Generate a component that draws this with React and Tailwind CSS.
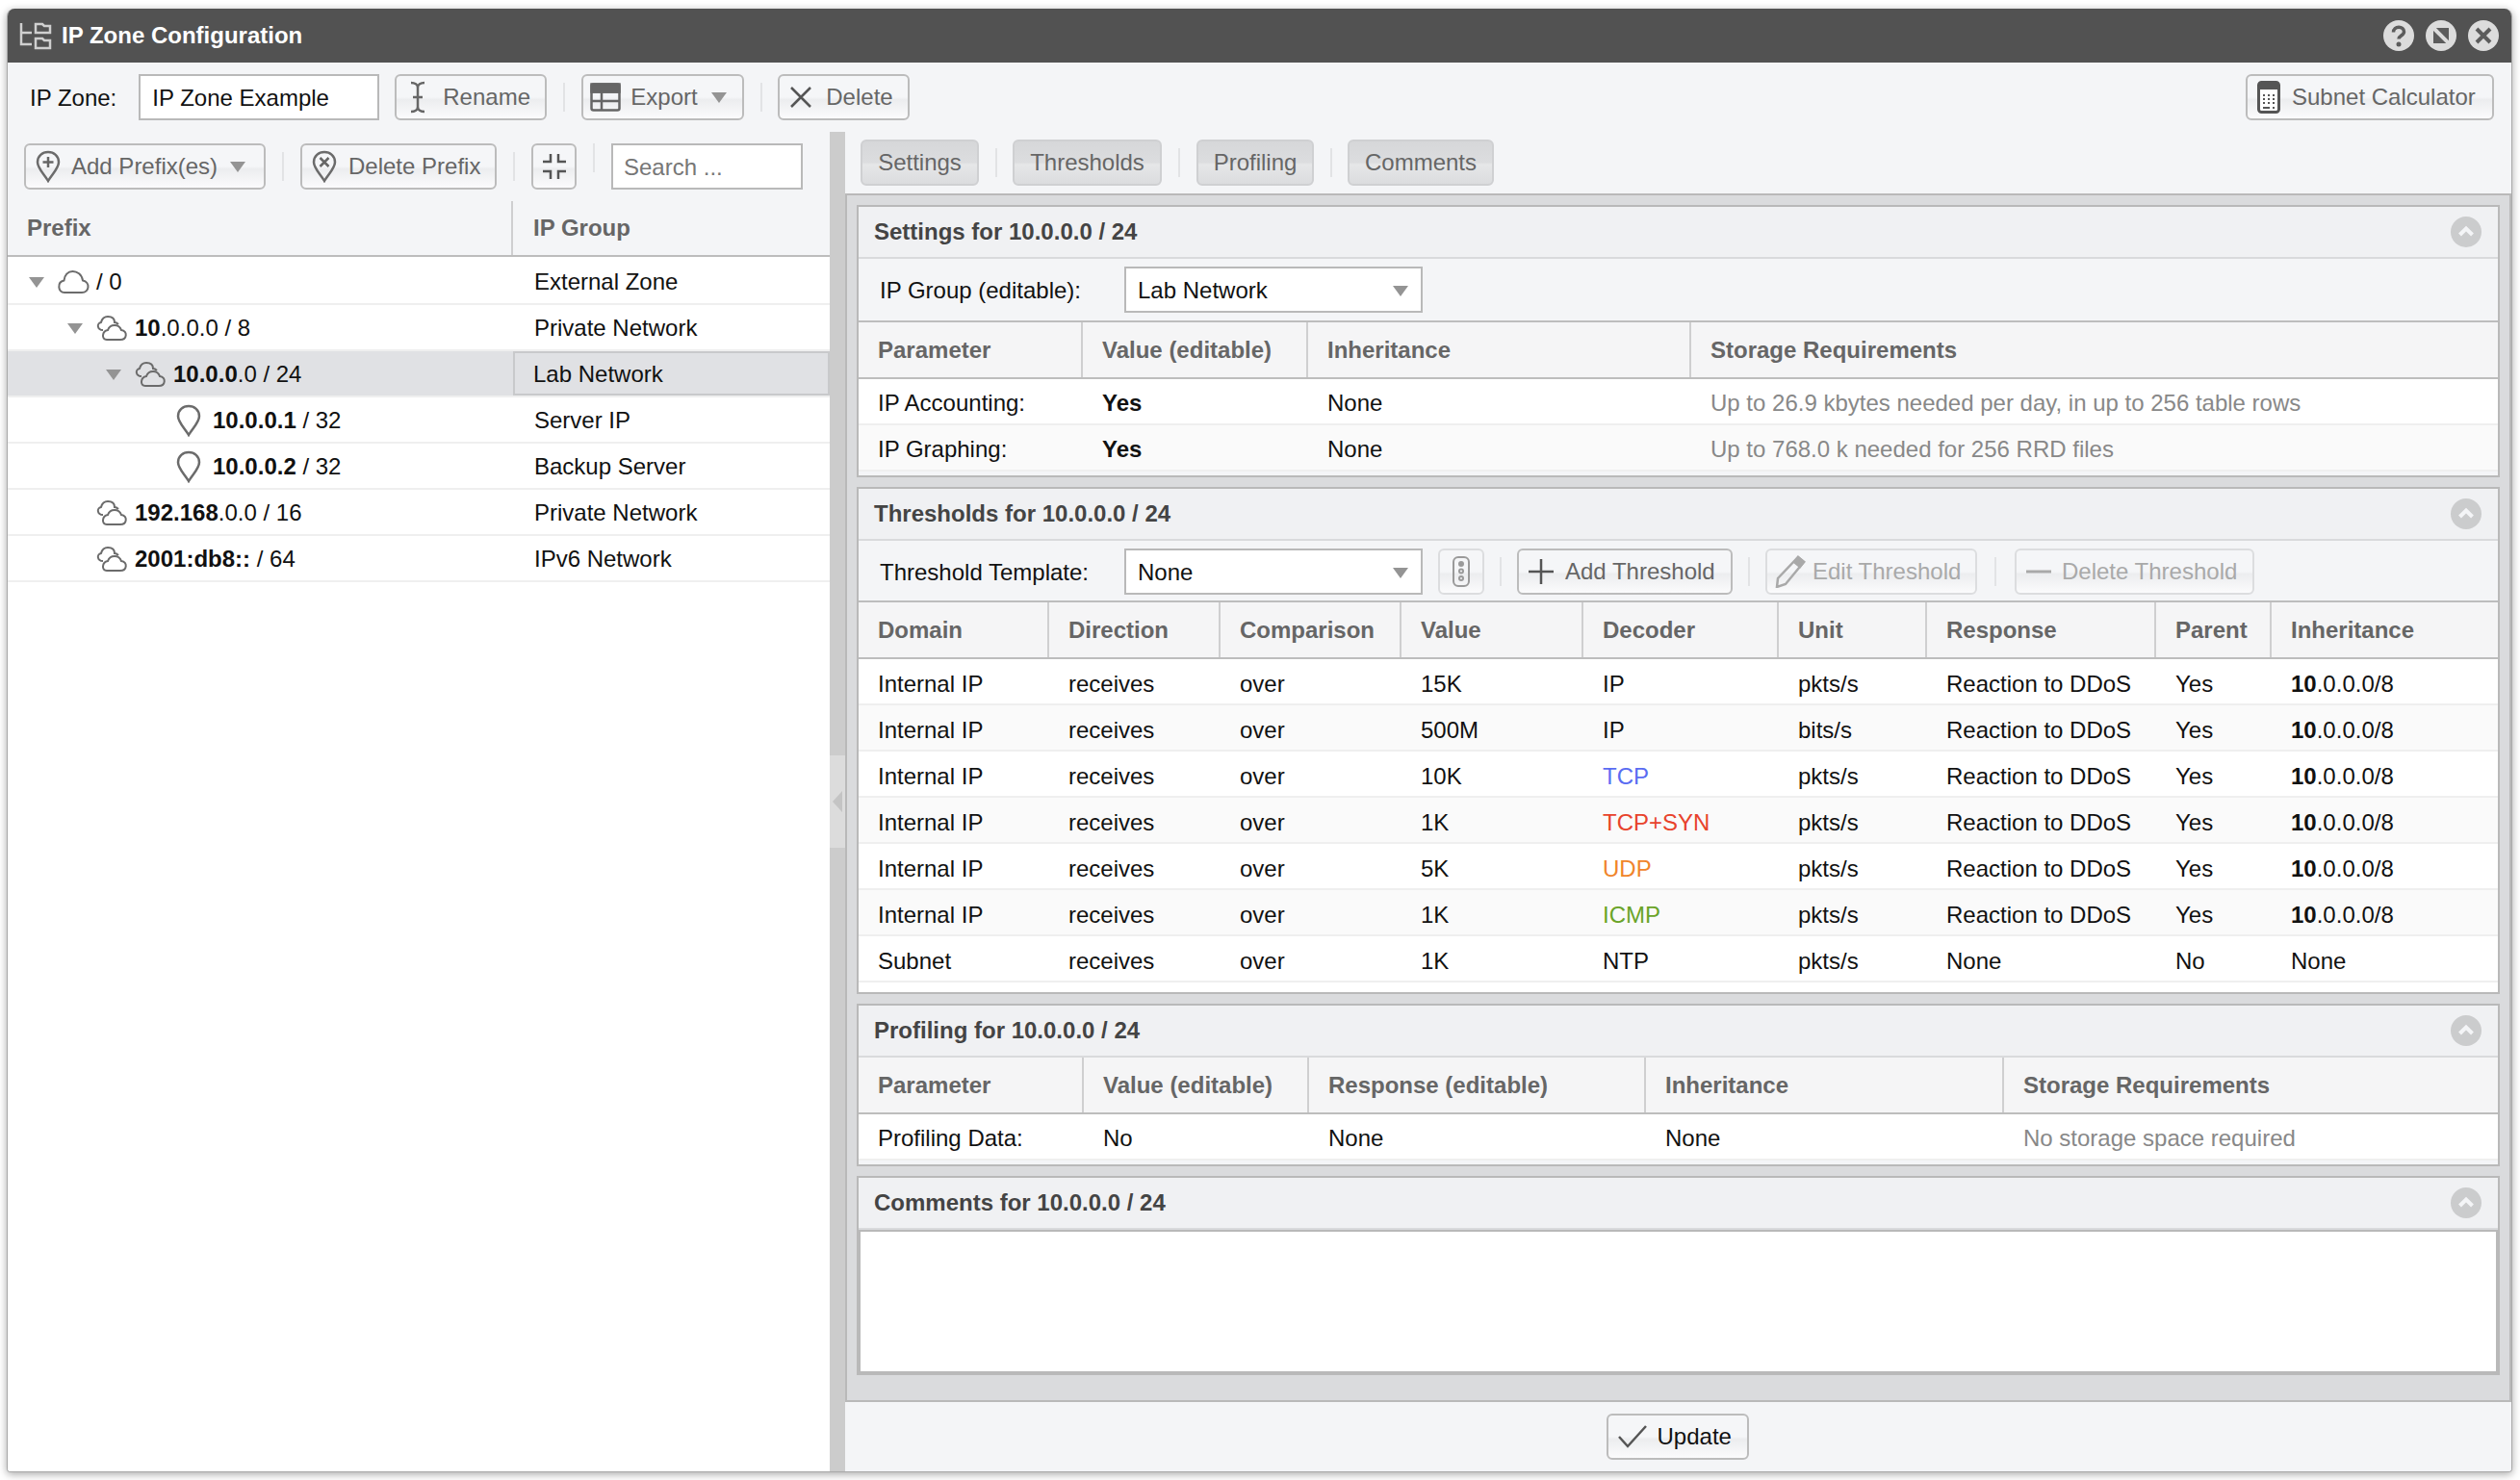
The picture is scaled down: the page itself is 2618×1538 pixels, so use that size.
import React from "react";

const btnBg =
  "bg-[linear-gradient(#f5f6f8_0%,#f5f6f8_50%,#ecedef_56%,#fbfbfc_100%)]";

function Arrow({ className = "" }) {
  return (
    <svg width="16" height="11" viewBox="0 0 16 11" className={className}>
      <path d="M0 0h16l-8 11z" fill="#949494" />
    </svg>
  );
}

function Cloud() {
  return (
    <svg width="34" height="26" viewBox="0 0 34 26" fill="none" stroke="#6b6b6b" strokeWidth="2">
      <path d="M8 24h18c8 0 9-11 1-12.5C26 5 21 2 16.500 2 11.500 2 8 6 7.500 11.500 0 13 1 24 8 24z" />
    </svg>
  );
}

function Clouds() {
  return (
    <svg width="34" height="26" viewBox="0 0 34 26" fill="none" stroke="#6b6b6b" strokeWidth="2">
      <path d="M12 25h14c7 0 8-9 1-10-1-3-4-5-7-5-3 0-6 2-7 5-6 1-7 10-1 10z" />
      <path d="M8 15C2 15 1 8 6 7c1-4 4-6 7-6 4 0 7 2 7 6 2 0 3 1 4 2" />
    </svg>
  );
}

function Pin({ inner }) {
  return (
    <svg width="26" height="34" viewBox="0 0 26 34" fill="none" stroke="#6b6b6b" strokeWidth="2.500">
      <path d="M13 32C9 25 2 19 2 12.500 2 6 7 2 13 2s11 4 11 10.500C24 19 17 25 13 32z" />
      {inner}
    </svg>
  );
}

function Btn({ w, children, disabled, onlyIcon }) {
  return (
    <div
      className={`${w} ${btnBg} h-[48px] shrink-0 flex items-center border-2 rounded-[6px] ${
        onlyIcon ? "justify-center" : "px-[10px] gap-[11px]"
      } ${disabled ? "border-[#dcdddf] text-[#a9a9a9]" : "border-[#bcbcbc] text-[#666]"}`}
    >
      {children}
    </div>
  );
}

function Sep({ m = "mx-[17px]" }) {
  return <div className={`w-[2px] h-[30px] shrink-0 bg-[#e2e3e5] ${m}`} />;
}

function InputBox({ w, children, gray, pl = "pl-[12px]" }) {
  return (
    <div
      className={`${w} h-[48px] shrink-0 flex items-center justify-between bg-white border-2 border-[#b9b9b9] pt-[2px] ${pl} pr-[13px] ${
        gray ? "text-[#777]" : "text-[#111]"
      }`}
    >
      {children}
    </div>
  );
}

const treeRows = [
  { pad: "pl-[21px]", arrow: true, icon: <Cloud />, bold: "", rest: "/ 0", group: "External Zone" },
  { pad: "pl-[61px]", arrow: true, icon: <Clouds />, bold: "10", rest: ".0.0.0 / 8", group: "Private Network" },
  { pad: "pl-[101px]", arrow: true, icon: <Clouds />, bold: "10.0.0", rest: ".0 / 24", group: "Lab Network", selected: true },
  { pad: "pl-[175px]", icon: <Pin />, bold: "10.0.0.1", rest: " / 32", group: "Server IP", pin: true },
  { pad: "pl-[175px]", icon: <Pin />, bold: "10.0.0.2", rest: " / 32", group: "Backup Server", pin: true },
  { pad: "pl-[91px]", icon: <Clouds />, bold: "192.168", rest: ".0.0 / 16", group: "Private Network" },
  { pad: "pl-[91px]", icon: <Clouds />, bold: "2001:db8::", rest: " / 64", group: "IPv6 Network" },
];

function TreeRow({ row }) {
  return (
    <div
      className={`h-[48px] flex border-b-2 border-[#efefef] text-[#111] ${row.selected ? "bg-[#e0e1e4]" : ""}`}
    >
      <div className={`w-[525px] shrink-0 flex items-center pt-[2px] ${row.pad}`}>
        {row.arrow && <Arrow className="mr-[13px] ml-[1px]" />}
        {row.icon}
        <span className={`${row.pin ? "ml-[12px]" : "ml-[7px]"} whitespace-pre`}>
          <b>{row.bold}</b>
          {row.rest}
        </span>
      </div>
      <div
        className={`flex-1 flex items-center pt-[2px] ${row.selected ? "border-2 border-[#c8c9cb] pl-[19px]" : "pl-[22px]"}`}
      >
        {row.group}
      </div>
    </div>
  );
}

function Panel({ title, children }) {
  return (
    <div className="border-2 border-[#b9b9b9] bg-[#f4f5f7]">
      <div className="h-[52px] flex items-center justify-between bg-[#f0f1f3] pl-[16px] pr-[17px] border-b-2 border-[#d9dadc] box-content">
        <span className="font-bold text-[#444]">{title}</span>
        <svg width="32" height="32" viewBox="0 0 32 32">
          <circle cx="16" cy="16" r="16" fill="#cbcccd" />
          <path d="M9.500 19L16 12.500 22.500 19" fill="none" stroke="#f4f5f7" strokeWidth="4" />
        </svg>
      </div>
      {children}
    </div>
  );
}

function HeadRow({ cols, names }) {
  return (
    <div className={`grid ${cols} h-[59px] bg-[#f5f5f6] border-b-2 border-[#bdbdbd] font-bold text-[#666]`}>
      {names.map((n, i) => (
        <div
          key={n}
          className={`flex items-center pl-[20px] ${i < names.length - 1 ? "border-r-2 border-[#cfcfd0]" : ""}`}
        >
          {n}
        </div>
      ))}
    </div>
  );
}

function BodyRow({ cols, cells, alt, pt = "pt-[4px]" }) {
  return (
    <div className={`grid ${cols} h-[48px] border-b-2 border-[#efefef] text-[#111] ${alt ? "bg-[#fafafa]" : "bg-white"}`}>
      {cells.map((c, i) => (
        <div key={i} className={`flex items-center pl-[20px] whitespace-nowrap ${pt}`}>
          {c}
        </div>
      ))}
    </div>
  );
}

const settingCols = "grid-cols-[233px_234px_398px_1fr]";
const thresholdCols = "grid-cols-[198px_178px_188px_189px_203px_154px_238px_120px_1fr]";
const profilingCols = "grid-cols-[234px_234px_350px_372px_1fr]";

const inherit = (
  <span>
    <b>10</b>.0.0.0/8
  </span>
);
const thresholdRows = [
  ["Internal IP", "receives", "over", "15K", "IP", "pkts/s", "Reaction to DDoS", "Yes", inherit],
  ["Internal IP", "receives", "over", "500M", "IP", "bits/s", "Reaction to DDoS", "Yes", inherit],
  ["Internal IP", "receives", "over", "10K", <span className="text-[#5a6cf2]">TCP</span>, "pkts/s", "Reaction to DDoS", "Yes", inherit],
  ["Internal IP", "receives", "over", "1K", <span className="text-[#e8432c]">TCP+SYN</span>, "pkts/s", "Reaction to DDoS", "Yes", inherit],
  ["Internal IP", "receives", "over", "5K", <span className="text-[#f0852b]">UDP</span>, "pkts/s", "Reaction to DDoS", "Yes", inherit],
  ["Internal IP", "receives", "over", "1K", <span className="text-[#6aa428]">ICMP</span>, "pkts/s", "Reaction to DDoS", "Yes", inherit],
  ["Subnet", "receives", "over", "1K", "NTP", "pkts/s", "None", "No", "None"],
];

function TitleCircle({ children }) {
  return (
    <svg width="32" height="32" viewBox="0 0 32 32">
      <circle cx="16" cy="16" r="16" fill="#dcdcdc" />
      {children}
    </svg>
  );
}

function Tab({ w, children }) {
  return (
    <div
      className={`${w} h-[48px] shrink-0 flex items-center justify-center rounded-[6px] border-2 border-[#cfd0d2] text-[#666] bg-[linear-gradient(#d6d7d9_0%,#dcdddf_50%,#e6e7e8_54%,#dbdcde_100%)]`}
    >
      {children}
    </div>
  );
}

export default function App() {
  return (
    <div className="w-[2618px] h-[1538px] bg-white pt-[9px] pl-[7px] font-['Liberation_Sans',Arial,sans-serif] text-[24px] leading-none overflow-hidden">
      <div className="w-[2603px] h-[1521px] flex flex-col rounded-t-[8px] rounded-b-[4px] border-x border-b border-[#a9a9a9] shadow-[0_2px_8px_rgba(0,0,0,0.35)] overflow-hidden bg-[#f4f5f7]">
        {/* title bar */}
        <div className="h-[56px] shrink-0 bg-[#525252] flex items-center justify-between pl-[12px] pr-[13px]">
          <div className="flex items-center gap-[10px]">
            <svg width="34" height="30" viewBox="0 0 34 30" fill="none" stroke="#cfcfcf" strokeWidth="2.500">
              <path d="M2 2v22h11M2 12h11" />
              <path d="M17 3h7l2 2h6v7H17zM17 18h7l2 2h6v8H17z" />
            </svg>
            <span className="text-white font-bold">IP Zone Configuration</span>
          </div>
          <div className="flex items-center gap-[12px]">
            <TitleCircle>
              <path d="M10.500 12.500c0-7 11-7 11-.5 0 4-5.500 4-5.500 7.500" fill="none" stroke="#5c5c5c" strokeWidth="3.500" />
              <circle cx="16" cy="25" r="2.500" fill="#5c5c5c" />
            </TitleCircle>
            <TitleCircle>
              <rect x="8" y="8" width="16" height="16" fill="#5c5c5c" />
              <path d="M6 6l20 20" stroke="#dcdcdc" strokeWidth="4" />
            </TitleCircle>
            <TitleCircle>
              <path d="M9 9l14 14M23 9L9 23" stroke="#5c5c5c" strokeWidth="4" />
            </TitleCircle>
          </div>
        </div>

        {/* top toolbar */}
        <div className="h-[72px] shrink-0 flex items-start pt-[12px] pl-[23px] pr-[18px]">
          <span className="h-[48px] flex items-center pt-[2px] text-[#111] mr-[23px]">IP Zone:</span>
          <InputBox w="w-[250px]">IP Zone Example</InputBox>
          <div className="w-[16px]" />
          <Btn w="w-[158px]">
            <svg width="26" height="34" viewBox="0 0 26 34" fill="none" stroke="#666" strokeWidth="2.500" className="ml-[-1px]">
              <path d="M6 2c4 0 7 2 7 5v20c0 3-3 5-7 5M20 2c-4 0-7 2-7 5v20c0 3 3 5 7 5M8 17h10" />
            </svg>
            <span className="ml-[2px]">Rename</span>
          </Btn>
          <div className="self-center mt-[-12px]">
            <Sep />
          </div>
          <Btn w="w-[169px]">
            <svg width="32" height="30" viewBox="0 0 32 30" fill="none" stroke="#666" strokeWidth="2.500" className="ml-[-3px]">
              <rect x="1.500" y="1.500" width="29" height="27" rx="2" />
              <path d="M1.500 9.500h29M1.500 19h29M12 9.500v19" />
              <path d="M1.500 1.500h29v8h-29z" fill="#666" />
            </svg>
            <span className="ml-[-1px]">Export</span>
            <Arrow className="ml-[3px]" />
          </Btn>
          <div className="self-center mt-[-12px]">
            <Sep m="ml-[17px] mr-[16px]" />
          </div>
          <Btn w="w-[137px]">
            <svg width="24" height="24" viewBox="0 0 24 24" stroke="#555" strokeWidth="2.500">
              <path d="M2 2l20 20M22 2L2 22" />
            </svg>
            <span className="text-[#666] ml-[3px]">Delete</span>
          </Btn>
          <div className="flex-1" />
          <Btn w="w-[258px]">
            <svg width="24" height="34" viewBox="0 0 24 34" className="shrink-0">
              <rect x="1.500" y="1.500" width="21" height="31" rx="3" fill="#fff" stroke="#555" strokeWidth="3" />
              <rect x="3" y="3" width="18" height="6" fill="#555" />
              <path d="M6 15h2M11 15h2M16 15h2M6 19h2M11 19h2M16 19h2M6 23h2M11 23h2M16 23h2M6 28h7M16 28h2" stroke="#555" strokeWidth="2" />
            </svg>
            <span className="ml-[1px]">Subnet Calculator</span>
          </Btn>
        </div>

        {/* body */}
        <div className="flex-1 flex min-h-0">
          {/* left panel */}
          <div className="w-[854px] shrink-0 flex flex-col">
            <div className="h-[72px] shrink-0 flex items-start pt-[12px] pl-[17px]">
              <Btn w="w-[251px]">
                <Pin
                  inner={<path d="M13 7v11M7.500 12.500h11" stroke="#666" strokeWidth="2.500" />}
                />
                <span>Add Prefix(es)</span>
                <Arrow className="ml-[2px]" />
              </Btn>
              <div className="self-center mt-[-12px]">
                <Sep />
              </div>
              <Btn w="w-[204px]">
                <Pin
                  inner={<path d="M8.500 8l9 9M17.500 8l-9 9" stroke="#666" strokeWidth="2.500" />}
                />
                <span className="ml-[1px]">Delete Prefix</span>
              </Btn>
              <div className="self-center mt-[-12px]">
                <Sep />
              </div>
              <Btn w="w-[47px]" onlyIcon>
                <svg width="26" height="28" viewBox="0 0 26 28" fill="none" stroke="#555" strokeWidth="2.500" className="shrink-0">
                  <path d="M9 1v8H1M17 1v8h8M9 27v-8H1M17 27v-8h8" />
                </svg>
              </Btn>
              <Sep />
              <InputBox w="w-[199px]" gray pl="pl-[11px]">
                Search ...
              </InputBox>
            </div>
            <div className="h-[58px] shrink-0 flex border-b-2 border-[#bdbdbd] font-bold text-[#666]">
              <div className="w-[525px] shrink-0 flex items-center pl-[20px] border-r-2 border-[#cfcfd0]">Prefix</div>
              <div className="flex-1 flex items-center pl-[21px]">IP Group</div>
            </div>
            <div className="flex-1 bg-white pt-[2px]">
              {treeRows.map((row, i) => (
                <TreeRow key={i} row={row} />
              ))}
            </div>
          </div>

          {/* splitter */}
          <div className="w-[16px] shrink-0 bg-[#cccccc] flex flex-col pt-[648px]">
            <div className="h-[96px] bg-[#dcdcdc] flex items-center justify-center">
              <svg width="10" height="22" viewBox="0 0 10 22">
                <path d="M10 0v22L0 11z" fill="#c4c4c4" />
              </svg>
            </div>
          </div>

          {/* right panel */}
          <div className="flex-1 min-w-0 flex flex-col">
            <div className="h-[64px] shrink-0 flex items-start pt-[8px] pl-[16px]">
              <Tab w="w-[123px]">Settings</Tab>
              <div className="self-center mt-[-8px]">
                <Sep m="ml-[17px] mr-[16px]" />
              </div>
              <Tab w="w-[155px]">Thresholds</Tab>
              <div className="self-center mt-[-8px]">
                <Sep />
              </div>
              <Tab w="w-[122px]">Profiling</Tab>
              <div className="self-center mt-[-8px]">
                <Sep m="ml-[17px] mr-[16px]" />
              </div>
              <Tab w="w-[152px]">Comments</Tab>
            </div>
            <div className="flex-1 flex flex-col gap-[10px] bg-[#dadbdd] border-2 border-[#b9b9b9] pt-[10px] pl-[10px] pr-[10px]">
              <Panel title="Settings for 10.0.0.0 / 24">
                <div className="h-[64px] flex items-center pl-[22px] border-b-2 border-[#bdbdbd] box-content">
                  <span className="w-[254px] pt-[2px] text-[#111]">IP Group (editable):</span>
                  <InputBox w="w-[310px]">
                    Lab Network
                    <Arrow />
                  </InputBox>
                </div>
                <HeadRow cols={settingCols} names={["Parameter", "Value (editable)", "Inheritance", "Storage Requirements"]} />
                <BodyRow cols={settingCols} cells={["IP Accounting:", <b>Yes</b>, "None", <span className="text-[#888]">Up to 26.9 kbytes needed per day, in up to 256 table rows</span>]} />
                <BodyRow alt cols={settingCols} cells={["IP Graphing:", <b>Yes</b>, "None", <span className="text-[#888]">Up to 768.0 k needed for 256 RRD files</span>]} />
                <div className="h-[4px]" />
              </Panel>

              <Panel title="Thresholds for 10.0.0.0 / 24">
                <div className="h-[60px] pt-[2px] flex items-center pl-[22px] border-b-2 border-[#bdbdbd] box-content">
                  <span className="w-[254px] pt-[2px] text-[#111]">Threshold Template:</span>
                  <InputBox w="w-[310px]">
                    None
                    <Arrow />
                  </InputBox>
                  <div className="w-[16px]" />
                  <Btn w="w-[48px]" disabled onlyIcon>
                    <svg width="22" height="34" viewBox="0 0 22 34" fill="none" stroke="#9a9a9a" strokeWidth="2" className="shrink-0">
                      <rect x="3" y="2" width="16" height="30" rx="5" />
                      <circle cx="11" cy="9" r="2" fill="#9a9a9a" />
                      <circle cx="11" cy="16.500" r="2" />
                      <circle cx="11" cy="24" r="2" />
                    </svg>
                  </Btn>
                  <Sep m="mx-[16px]" />
                  <Btn w="w-[224px]">
                    <svg width="26" height="26" viewBox="0 0 26 26" stroke="#555" strokeWidth="2.500" className="shrink-0">
                      <path d="M13 0v26M0 13h26" />
                    </svg>
                    <span className="ml-[1px]">Add Threshold</span>
                  </Btn>
                  <Sep m="mx-[16px]" />
                  <Btn w="w-[220px]" disabled>
                    <svg width="32" height="34" viewBox="0 0 32 34" fill="none" stroke="#a9a9a9" strokeWidth="2.500" className="shrink-0 ml-[-2px]">
                      <path d="M24 2l6 5L11 30l-9 3 1-9z" />
                      <path d="M24 2l6 5-4 5-6-5z" fill="#a9a9a9" />
                    </svg>
                    <span className="ml-[-4px]">Edit Threshold</span>
                  </Btn>
                  <Sep m="ml-[18px] mr-[19px]" />
                  <Btn w="w-[249px]" disabled>
                    <svg width="26" height="4" viewBox="0 0 26 4" className="shrink-0">
                      <path d="M0 2h26" stroke="#a9a9a9" strokeWidth="3" />
                    </svg>
                    <span>Delete Threshold</span>
                  </Btn>
                </div>
                <HeadRow
                  cols={thresholdCols}
                  names={["Domain", "Direction", "Comparison", "Value", "Decoder", "Unit", "Response", "Parent", "Inheritance"]}
                />
                {thresholdRows.map((cells, i) => (
                  <BodyRow key={i} alt={i % 2 === 1} cols={thresholdCols} cells={cells} pt="pt-[6px]" />
                ))}
                <div className="h-[10px] bg-white" />
              </Panel>

              <Panel title="Profiling for 10.0.0.0 / 24">
                <HeadRow
                  cols={profilingCols}
                  names={["Parameter", "Value (editable)", "Response (editable)", "Inheritance", "Storage Requirements"]}
                />
                <BodyRow
                  cols={profilingCols}
                  cells={["Profiling Data:", "No", "None", "None", <span className="text-[#888]">No storage space required</span>]}
                />
                <div className="h-[4px]" />
              </Panel>

              <Panel title="Comments for 10.0.0.0 / 24">
                <div className="h-[145px] bg-white border-2 border-[#b9b9b9] box-content" />
              </Panel>
            </div>
            <div className="h-[72px] shrink-0 flex items-start justify-center pt-[12px] pr-[2px] bg-[#f4f5f7]">
              <Btn w="w-[148px]">
                <svg width="30" height="24" viewBox="0 0 30 24" fill="none" stroke="#555" strokeWidth="2.500" className="shrink-0">
                  <path d="M1 12l9 10L29 1" />
                </svg>
                <span className="text-[#111]">Update</span>
              </Btn>
            </div>
          </div>
        </div>
      </div>
    </div>
  );
}
